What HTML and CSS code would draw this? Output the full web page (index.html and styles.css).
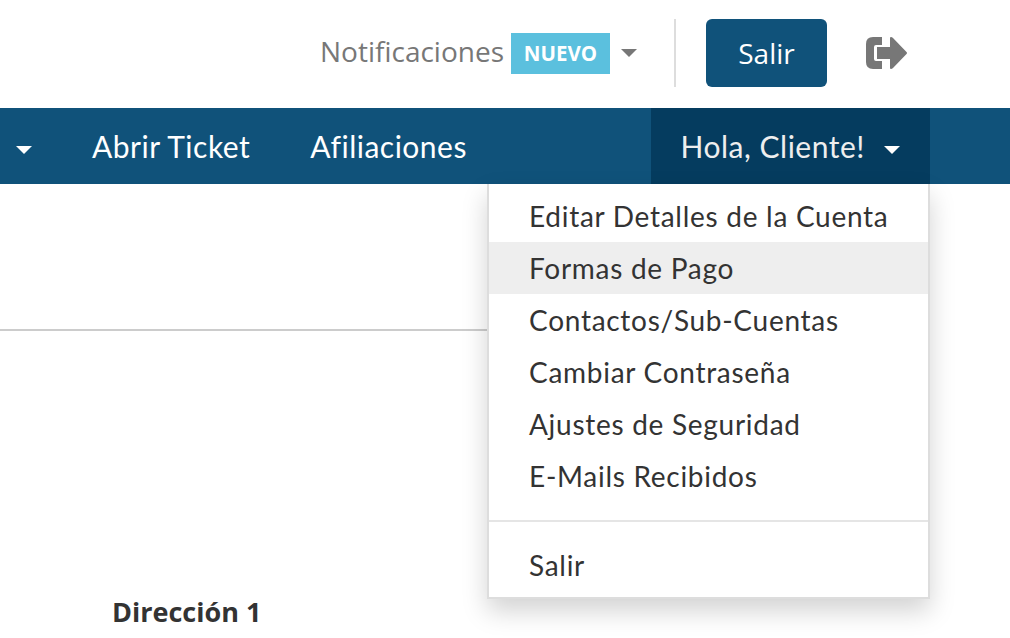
FILE: index.html
```html
<!DOCTYPE html>
<html lang="es">
<head>
  <meta charset="UTF-8" />
  <title>Formas de Pago</title>
  <link rel="stylesheet" href="styles.css">
</head>
<body>
  <div class="topbar">
    <a class="notifications"><span class="notifications-label">Notificaciones</span> <span class="badge">NUEVO</span><span class="caret caret-grey"></span></a>
    <span class="separator"></span>
    <a class="logout-btn">Salir</a>
    <svg class="logout-icon" viewBox="0 0 41 32" width="41" height="32">
      <path fill="#777" d="M16 0H7Q0 0 0 7V25Q0 32 7 32H16V24H10Q8 24 8 22V10Q8 8 10 8H16Z"/>
      <path fill="#777" d="M11 10H24V1Q24 0 25 0Q26 0 27 1L40.5 15Q41.5 16 40.5 17L27 31Q26 32 25 32Q24 32 24 31V22H11Z"/>
    </svg>
  </div>

  <nav class="navbar">
    <a class="nav-item nav-first"><span class="caret"></span></a>
    <a class="nav-item">Abrir Ticket</a>
    <a class="nav-item">Afiliaciones</a>
    <div class="nav-user">
      <a class="nav-item nav-user-toggle">Hola, Cliente! <span class="caret"></span></a>
      <ul class="dropdown">
        <li><a>Editar Detalles de la Cuenta</a></li>
        <li class="active"><a>Formas de Pago</a></li>
        <li><a>Contactos/Sub-Cuentas</a></li>
        <li><a>Cambiar Contraseña</a></li>
        <li><a>Ajustes de Seguridad</a></li>
        <li><a>E-Mails Recibidos</a></li>
        <li class="divider"></li>
        <li><a>Salir</a></li>
      </ul>
    </div>
  </nav>

  <main class="content">
    <div class="page-header"></div>
    <label class="field-label">Dirección 1</label>
  </main>
</body>
</html>
```

FILE: styles.css
```css
html, body {
  height: 638px;
  overflow: hidden;
}

body {
  margin: 0;
  background-color: #fff;
  color: #333;
  font-family: "Open Sans", sans-serif;
}

a {
  display: block;
}

.topbar {
  height: 108px;
  display: flex;
  align-items: center;
  justify-content: flex-end;
  padding: 0 103px 2px 0;
  box-sizing: border-box;
}

.notifications {
  display: flex;
  align-items: center;
  gap: 7px;
  font-size: 28px;
  color: #777;
}

.notifications-label {
  margin-bottom: 4px;
}

.badge {
  background-color: #5bc0de;
  color: #fff;
  font-size: 20.5px;
  font-weight: 700;
  width: 99px;
  height: 41px;
  line-height: 41px;
  text-align: center;
}

.caret {
  display: inline-block;
  width: 0;
  height: 0;
  border-left: 8px solid transparent;
  border-right: 8px solid transparent;
  border-top: 8px solid #fff;
  vertical-align: middle;
}

.caret-grey {
  border-top-color: #777;
  margin-left: 4px;
}

.separator {
  width: 2px;
  height: 68px;
  background-color: #ddd;
  margin: 0 30px 0 37px;
}

.logout-btn {
  width: 121px;
  height: 68px;
  line-height: 68px;
  text-align: center;
  background-color: #10527a;
  color: #fff;
  font-size: 28px;
  border-radius: 6px;
}

.logout-icon {
  margin-left: 39px;
}

.navbar {
  height: 76px;
  background-color: #10527a;
  display: flex;
  padding-right: 80px;
  font-family: "Lato", sans-serif;
  font-size: 30px;
  letter-spacing: 0.5px;
}

.nav-item {
  padding: 0 30px;
  line-height: 76px;
  color: #fff;
}

.nav-first {
  padding-left: 16px;
}

.nav-user {
  position: relative;
  margin-left: auto;
  background-color: #053c5f;
}

.nav-user-toggle {
  color: #eee;
}

.nav-user-toggle .caret {
  margin-left: 11px;
}

.dropdown {
  position: absolute;
  top: 76px;
  right: 0;
  width: 443px;
  box-sizing: border-box;
  margin: 0;
  padding: 6px 0;
  list-style: none;
  background-color: #fff;
  border: 2px solid #ddd;
  border-top: 0;
  box-shadow: 0 12px 24px rgba(0, 0, 0, 0.175);
  font-size: 28px;
  letter-spacing: 0.72px;
  color: #333;
}

.dropdown a {
  height: 52px;
  line-height: 52px;
  padding: 0 20px 0 40px;
  white-space: nowrap;
}

.dropdown .active {
  background-color: #eee;
}

.dropdown .divider {
  height: 2px;
  margin: 18px 0 17px;
  background-color: #e5e5e5;
}

.page-header {
  width: 488px;
  height: 145px;
  border-bottom: 2px solid #ccc;
}

.field-label {
  display: block;
  margin: 263px 0 0 112px;
  font-size: 27px;
  font-weight: 700;
  line-height: 36px;
}
```
